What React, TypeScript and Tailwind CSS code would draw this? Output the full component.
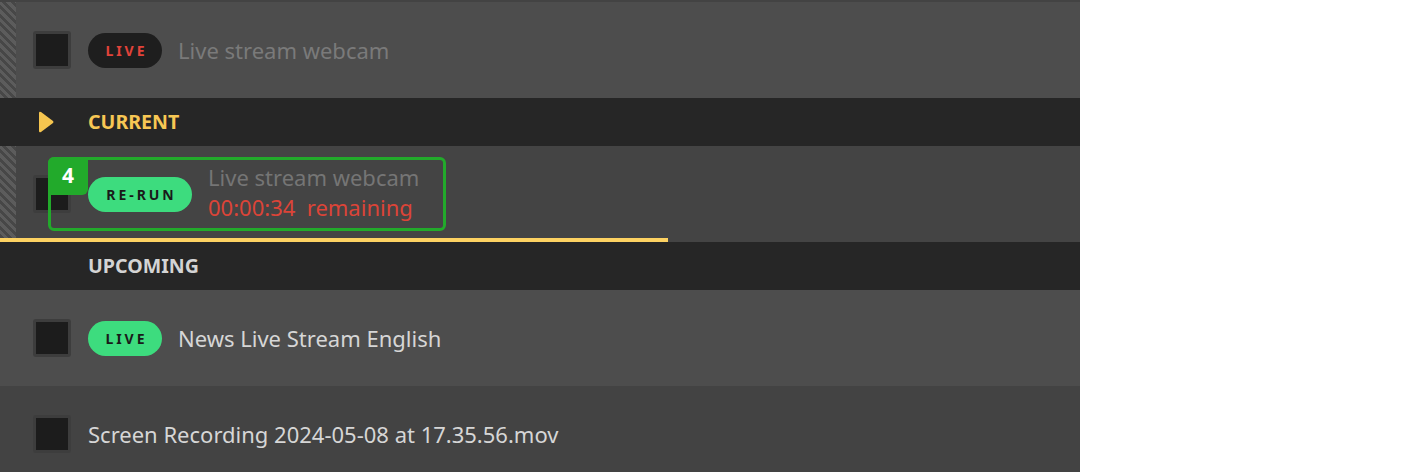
import React from "react";

const font = { fontFamily: '"Noto Sans", "Open Sans", sans-serif' };

function Stripes() {
  return (
    <div className="absolute left-0 top-0 bottom-0 w-[16px] bg-[repeating-linear-gradient(45deg,#5c5c5c_0px,#5c5c5c_3px,#474747_3px,#474747_6px)]" />
  );
}

function Checkbox() {
  return (
    <div className="w-[38px] h-[38px] rounded-[3px] bg-[#3d3d3d] p-[3px] shrink-0">
      <div className="w-full h-full bg-[#1c1c1c]" />
    </div>
  );
}

function Pill({ label, variant, width }: { label: string; variant: "dark" | "green"; width: string }) {
  const cls =
    variant === "dark"
      ? "bg-[#1e1e1e] text-[#e2433a]"
      : "bg-[#3ddc7e] text-[#1a1a1a]";
  return (
    <div
      className={`h-[35px] ${width} shrink-0 rounded-full flex items-center justify-center text-[14px] font-bold tracking-[0.21em] indent-[0.21em] ${cls}`}
    >
      {label}
    </div>
  );
}

function SectionHeader({ label, current }: { label: string; current?: boolean }) {
  return (
    <div className="h-[48px] bg-[#262626] flex items-center">
      <div className="w-[88px] flex items-center pl-[38px]">
        {current && (
          <svg width="16" height="22" viewBox="0 0 16 22">
            <path d="M1 2 Q1 0 3 1 L15 10 Q16 11 15 12 L3 21 Q1 22 1 20 Z" fill="#f5c54f" />
          </svg>
        )}
      </div>
      <span
        className={`text-[19.6px] font-bold ${current ? "text-[#f7c754]" : "text-[#d4d4d4]"}`}
      >
        {label}
      </span>
    </div>
  );
}

export default function App() {
  return (
    <div className="w-[1080px] h-[472px] overflow-hidden bg-[#434343]" style={font}>
      <div className="h-[2px] bg-[#434343]" />
      {/* past row */}
      <div className="relative h-[96px] bg-[#4d4d4d] flex items-center">
        <Stripes />
        <div className="pl-[33px] pr-[17px]">
          <Checkbox />
        </div>
        <Pill label="LIVE" variant="dark" width="w-[74px]" />
        <span className="ml-[16px] text-[22px] text-[#7a7a7a]">Live stream webcam</span>
      </div>

      <SectionHeader label="CURRENT" current />

      {/* current row */}
      <div className="relative h-[96px] bg-[#444444] flex items-center">
        <Stripes />
        <div className="pl-[33px] pr-[17px]">
          <Checkbox />
        </div>
        <Pill label="RE-RUN" variant="green" width="w-[104px]" />
        <div className="ml-[16px] -mt-[4px] flex flex-col leading-[30px]">
          <span className="text-[22px] text-[#757575]">Live stream webcam</span>
          <span className="text-[22px] text-[#dc4438]">
            00:00:34&nbsp; remaining
          </span>
        </div>
        <div className="absolute left-[48px] top-[11px] w-[398px] h-[74px] border-[3px] border-[#22aa2b] rounded-[6px]">
          <div className="absolute -left-[3px] -top-[3px] w-[40px] h-[38px] bg-[#22aa2b] rounded-tl-[6px] rounded-br-[6px] flex items-center justify-center text-white text-[21px] font-bold">
            4
          </div>
        </div>
        <div className="absolute left-0 bottom-0 h-[4px] w-[668px] bg-[#fdd262]" />
      </div>

      <SectionHeader label="UPCOMING" />

      <div className="relative h-[96px] bg-[#4d4d4d] flex items-center">
        <div className="pl-[33px] pr-[17px]">
          <Checkbox />
        </div>
        <Pill label="LIVE" variant="green" width="w-[74px]" />
        <span className="ml-[16px] text-[22px] text-[#d6d6d6]">News Live Stream English</span>
      </div>

      <div className="relative h-[96px] bg-[#434343] flex items-center">
        <div className="pl-[33px] pr-[17px]">
          <Checkbox />
        </div>
        <span className="text-[22px] text-[#d6d6d6]">Screen Recording 2024-05-08 at 17.35.56.mov</span>
      </div>
    </div>
  );
}
